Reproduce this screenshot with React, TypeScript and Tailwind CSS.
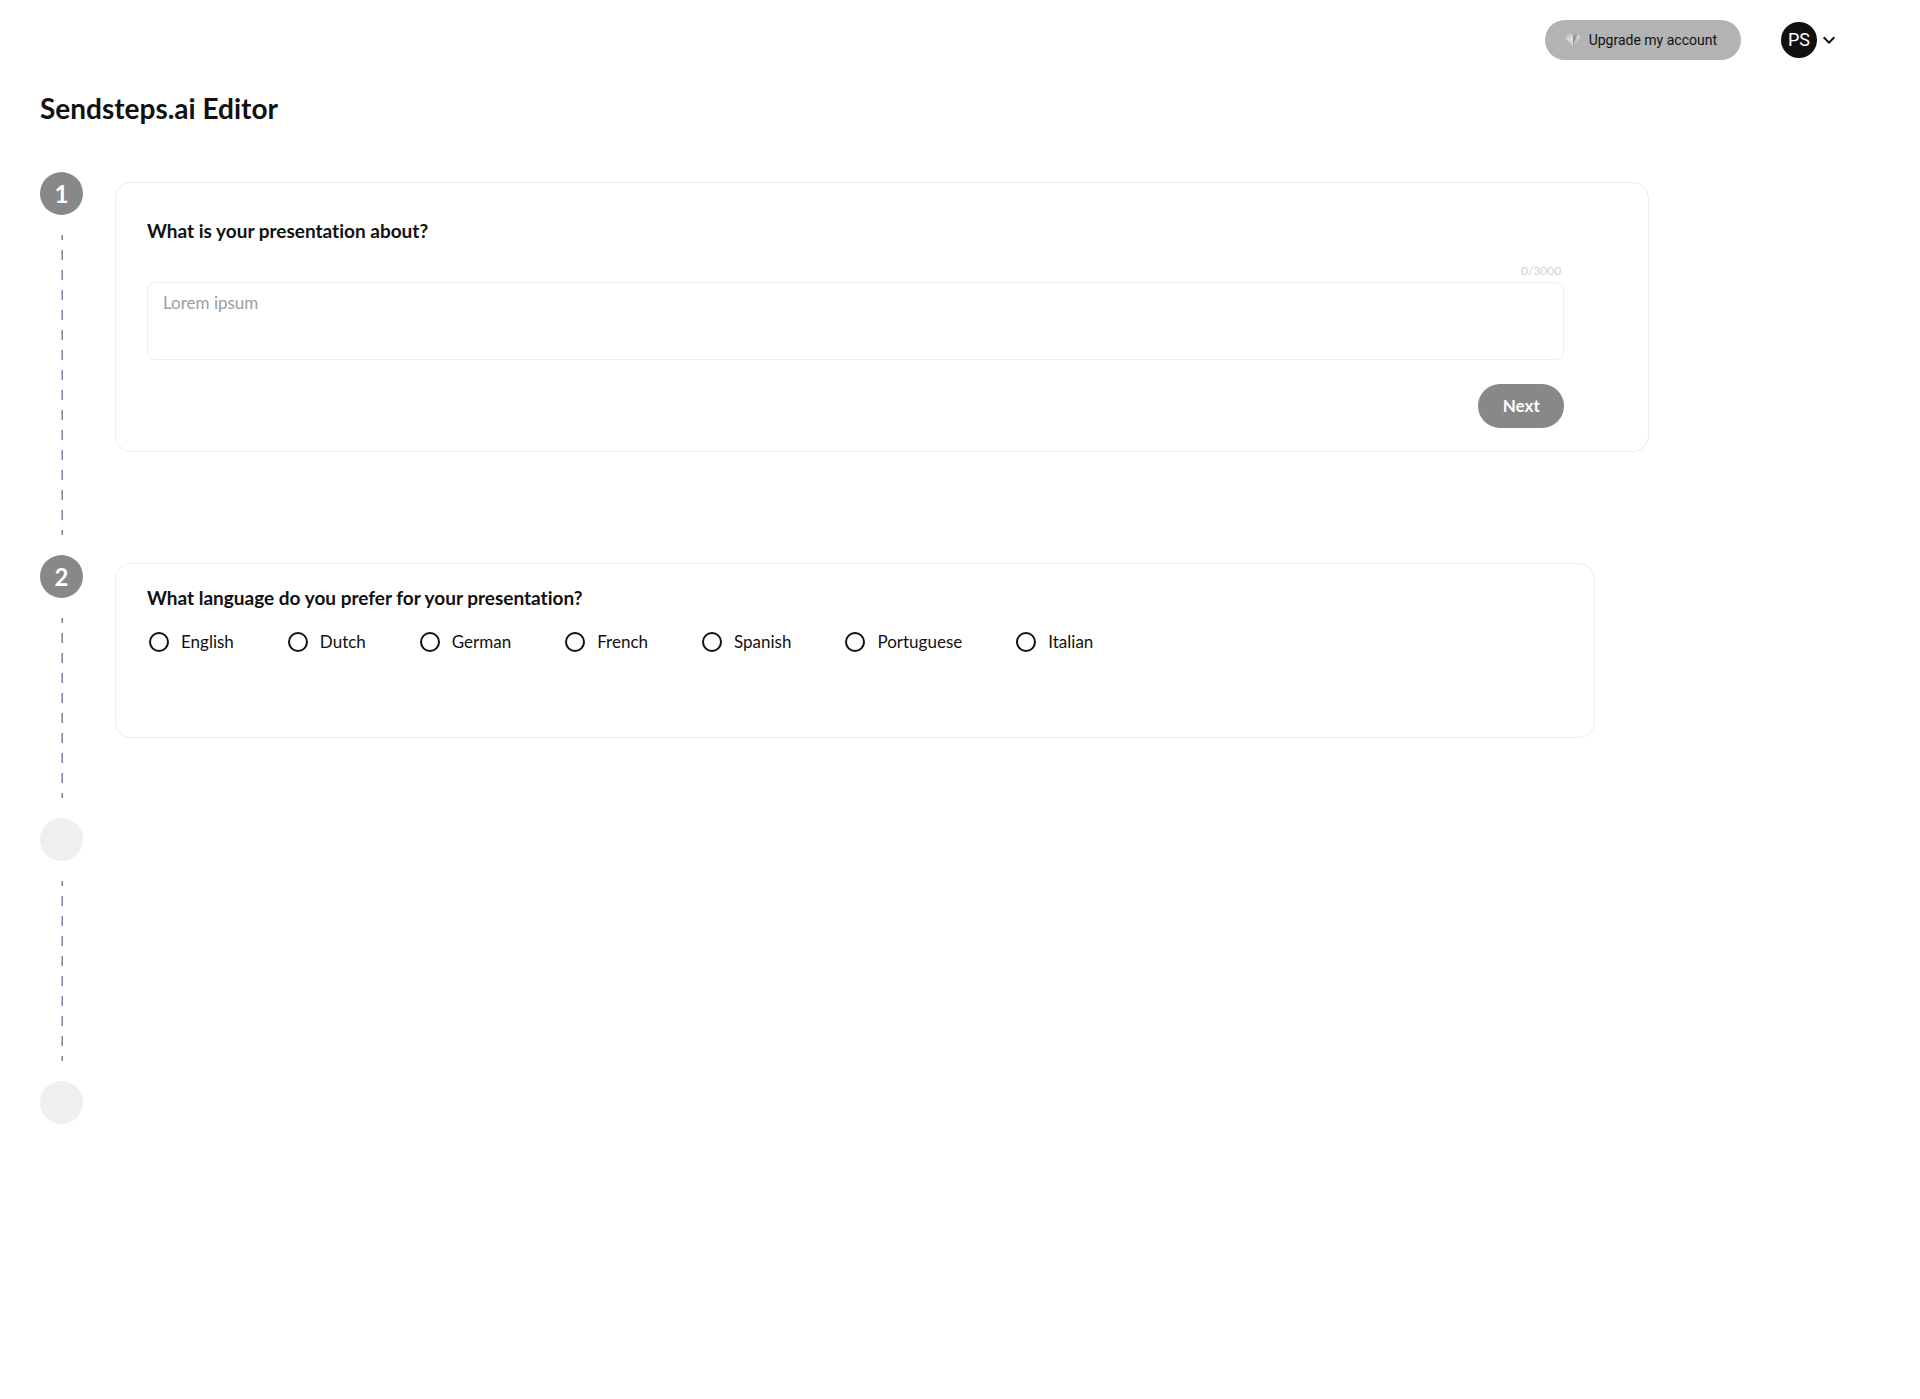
import { useState } from "react";
import { MdKeyboardArrowDown } from "react-icons/md";

const LANGUAGES = [
    "English",
    "Dutch",
    "German",
    "French",
    "Spanish",
    "Portuguese",
    "Italian",
];

const MAX_LENGTH = 3000;

const Diamond = () => (
    <svg width="16" height="12" viewBox="0 0 16 12" aria-hidden="true">
        <path d="M3 0h10l3 4-8 8-8-8z" fill="#a8a8a8" />
        <path d="M3 0h5L5 4H0z" fill="#cacaca" />
        <path d="M0 4h5l3 8z" fill="#d6d6d6" />
        <path d="M5 4h3v8z" fill="#e2e2e2" />
        <path d="M8 0 5 4h3z" fill="#dcdcdc" />
        <path d="M8 0l3 4H8z" fill="#929292" />
        <path d="M8 4h3l-3 8z" fill="#8e8e8e" />
        <path d="M11 4h5l-8 8z" fill="#c4c4c4" />
        <path d="M8 0h5l-2 4z" fill="#a4a4a4" />
        <path d="M13 0l3 4h-5z" fill="#d2d2d2" />
    </svg>
);

const Dashes = ({ className }: { className: string }) => (
    <div
        className={`my-5 ml-px w-[2px] bg-[repeating-linear-gradient(to_bottom,transparent_0_5px,#fff_5px_15px,transparent_15px_20px),linear-gradient(to_right,#c3bfc8_50%,#8d78a5_50%)] ${className}`}
    />
);

const Step = ({
    number,
    lineClass,
    children,
}: {
    number?: number;
    lineClass?: string;
    children?: React.ReactNode;
}) => (
    <li className="flex gap-8">
        <div className="flex w-[43px] shrink-0 flex-col items-center">
            <div
                className={`flex size-[43px] items-center justify-center rounded-full text-2xl font-bold text-white ${
                    number ? "bg-[#888888]" : "bg-[#efefef]"
                }`}
            >
                {number}
            </div>
            {lineClass && <Dashes className={lineClass} />}
        </div>
        <div className="min-w-0 flex-1">{children}</div>
    </li>
);

export default function App() {
    const [topic, setTopic] = useState("");
    const [language, setLanguage] = useState("");

    return (
        <div className="min-h-screen bg-white font-['Lato',sans-serif] text-[#111111] [font-variant-ligatures:none]">
            <header className="flex h-20 items-center justify-end gap-10 pr-[79px] font-['Roboto',sans-serif]">
                <button
                    type="button"
                    className="flex h-10 items-center gap-2 rounded-full bg-[#b3b3b3] pr-6 pl-5 text-sm"
                >
                    <Diamond />
                    Upgrade my account
                </button>
                <button
                    type="button"
                    aria-label="Account menu"
                    className="flex items-center"
                >
                    <span className="flex size-9 items-center justify-center rounded-full bg-[#111111] text-lg text-white">
                        PS
                    </span>
                    <MdKeyboardArrowDown size={24} />
                </button>
            </header>

            <main className="pb-10 pl-10">
                <h1 className="mt-3 text-[28px] leading-8 font-bold">
                    Sendsteps.ai Editor
                </h1>

                <ol className="mt-12">
                    <Step number={1} lineClass="h-[300px]">
                        <form
                            className="mt-[10px] w-[85%] rounded-2xl border border-[#ececec] py-[23px] pr-[84px] pl-[31px]"
                            onSubmit={(e) => e.preventDefault()}
                        >
                            <label
                                htmlFor="topic"
                                className="mt-[13px] block text-[19px] leading-6 font-bold"
                            >
                                What is your presentation about?
                            </label>
                            <p className="mt-[18px] mr-[3px] mb-px text-right text-xs leading-5 text-[#d0d0d0]">
                                {topic.length}/{MAX_LENGTH}
                            </p>
                            <textarea
                                id="topic"
                                value={topic}
                                maxLength={MAX_LENGTH}
                                onChange={(e) => setTopic(e.target.value)}
                                placeholder="Lorem ipsum"
                                className="block h-[78px] w-full resize-none rounded-lg border border-[#ececec] px-[15px] py-2 text-[17px] leading-6 placeholder:text-[#9d9d9d]"
                            />
                            <div className="mt-6 flex justify-end">
                                <button
                                    type="submit"
                                    className="h-11 w-[86px] rounded-full bg-[#888888] text-[17px] font-bold text-white"
                                >
                                    Next
                                </button>
                            </div>
                        </form>
                    </Step>

                    <Step number={2} lineClass="h-[180px]">
                        <fieldset className="mt-2 w-[82%] rounded-2xl border border-[#ececec] px-[31px] pt-[22px] pb-[83px]">
                            <legend className="float-left w-full text-[19px] leading-6 font-bold">
                                What language do you prefer for your
                                presentation?
                            </legend>
                            <div className="clear-both flex flex-wrap gap-x-[54px] pt-5 pl-[2px]">
                                {LANGUAGES.map((name) => (
                                    <label
                                        key={name}
                                        className="flex items-center gap-3 text-[17px] leading-6"
                                    >
                                        <input
                                            type="radio"
                                            name="language"
                                            value={name}
                                            checked={language === name}
                                            onChange={() => setLanguage(name)}
                                            className="size-5 appearance-none rounded-full border-2 border-[#111111] checked:border-[6px]"
                                        />
                                        {name}
                                    </label>
                                ))}
                            </div>
                        </fieldset>
                    </Step>

                    <Step lineClass="h-[180px]" />
                    <Step />
                </ol>
            </main>
        </div>
    );
}
